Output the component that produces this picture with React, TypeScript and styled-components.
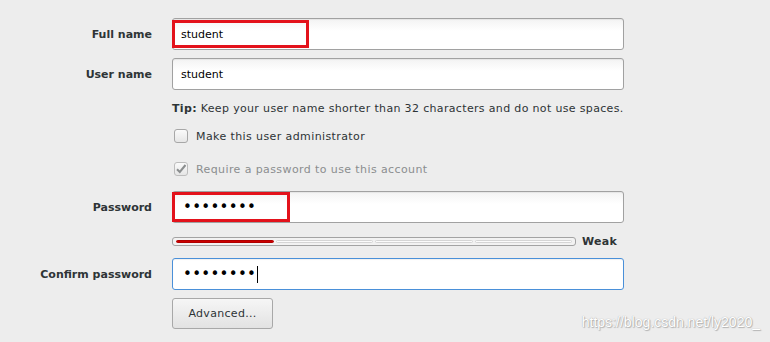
import React from 'react';
import styled, { createGlobalStyle } from 'styled-components';

const GlobalStyle = createGlobalStyle`
  html, body {
    margin: 0;
    padding: 0;
    background: #ededed;
  }
  body {
    font-family: 'DejaVu Sans', 'Liberation Sans', sans-serif;
    font-size: 11px;
    color: #2e3436;
  }
`;

const s = {
  Page: styled.div`
    position: relative;
    width: 770px;
    height: 342px;
    overflow: hidden;
    background: #ededed;
    padding-top: 18px;
    box-sizing: border-box;
  `,
  Row: styled.div<{ $mt?: number; $h?: number }>`
    display: grid;
    grid-template-columns: 152px 452px;
    column-gap: 20px;
    align-items: center;
    margin-top: ${(p) => p.$mt ?? 0}px;
    height: ${(p) => p.$h ?? 32}px;
  `,
  Label: styled.div`
    text-align: right;
    font-weight: bold;
    color: #2e3436;
  `,
  Entry: styled.div<{ $focus?: boolean }>`
    position: relative;
    height: 32px;
    box-sizing: border-box;
    border: 1px solid ${(p) => (p.$focus ? '#4a90d9' : '#a1a1a1')};
    border-radius: 3px;
    background: ${(p) => (p.$focus ? '#ffffff' : 'linear-gradient(#f3f3f3, #ffffff 40%)')};
    box-shadow: inset 0 1px 1px rgba(0, 0, 0, 0.06);
    display: flex;
    align-items: center;
    padding-left: 8px;
    color: #000;
  `,
  Dots: styled.span`
    font-size: 15px;
    letter-spacing: 0.3px;
    line-height: 1;
    padding-left: 2px;
    color: #000;
  `,
  Cursor: styled.span`
    display: inline-block;
    width: 1px;
    height: 17px;
    background: #000;
    margin-left: 1px;
  `,
  Annot: styled.div<{ $w: number; $h: number; $top: number }>`
    position: absolute;
    left: -1px;
    top: ${(p) => p.$top}px;
    width: ${(p) => p.$w}px;
    height: ${(p) => p.$h}px;
    box-sizing: border-box;
    border: 3px solid #e3121b;
  `,
  Tip: styled.div`
    color: #2e3436;
    white-space: nowrap;
    letter-spacing: 0.34px;
  `,
  Check: styled.label<{ $disabled?: boolean }>`
    display: flex;
    align-items: center;
    gap: 8px;
    padding-left: 2px;
    letter-spacing: 0.4px;
    color: ${(p) => (p.$disabled ? '#8b8e8f' : '#2e3436')};
  `,
  Box: styled.span<{ $disabled?: boolean }>`
    width: 14px;
    height: 14px;
    box-sizing: border-box;
    border: 1px solid ${(p) => (p.$disabled ? '#bdbdbd' : '#a7a7a7')};
    border-radius: 3px;
    background: linear-gradient(#fafafa, #e6e6e6);
    display: flex;
    align-items: center;
    justify-content: center;
  `,
  Strength: styled.div`
    display: flex;
    align-items: center;
    gap: 6px;
  `,
  Bar: styled.div`
    width: 404px;
    height: 9px;
    box-sizing: border-box;
    border: 1px solid #a3a3a3;
    border-radius: 3px;
    background: #f2f2f2;
    display: flex;
    gap: 2px;
    padding: 2px 3px;
  `,
  Segment: styled.div<{ $on?: boolean }>`
    flex: 1;
    height: 3px;
    box-sizing: border-box;
    border-radius: 2px;
    background: ${(p) => (p.$on ? '#cc0000' : '#fbfbfb')};
    border: 1px solid ${(p) => (p.$on ? '#b00000' : '#d5d5d5')};
  `,
  Weak: styled.span`
    font-weight: bold;
    letter-spacing: 0.3px;
    color: #2e3436;
  `,
  Button: styled.button`
    width: 101px;
    height: 31px;
    box-sizing: border-box;
    border: 1px solid #a8a8a8;
    border-radius: 3px;
    background: linear-gradient(#f6f6f6, #e2e2e2);
    font-family: 'DejaVu Sans', sans-serif;
    font-size: 11px;
    letter-spacing: 0.3px;
    color: #2e3436;
    padding: 0;
  `,
  Watermark: styled.div`
    position: absolute;
    right: 10px;
    bottom: 12px;
    font-family: 'Liberation Sans', Arial, sans-serif;
    font-size: 14px;
    color: #ffffff;
    text-shadow: 0 0 1px #9a9a9a, 1px 1px 1px #b5b5b5;
  `,
};

const Tick = () => (
  <svg width="12" height="12" viewBox="0 0 12 12">
    <path d="M2 6.2 L4.8 9 L10.5 2" fill="none" stroke="#8b8e8f" strokeWidth="2" />
  </svg>
);

const App = (): JSX.Element => {
  const segments = [true, false, false, false];
  return (
    <s.Page>
      <GlobalStyle />
      <s.Row>
        <s.Label>Full name</s.Label>
        <s.Entry>
          student
          <s.Annot $w={137} $h={28} $top={1} />
        </s.Entry>
      </s.Row>
      <s.Row $mt={8}>
        <s.Label>User name</s.Label>
        <s.Entry>student</s.Entry>
      </s.Row>
      <s.Row $mt={8} $h={20}>
        <span />
        <s.Tip>
          <b>Tip:</b> Keep your user name shorter than 32 characters and do not use spaces.
        </s.Tip>
      </s.Row>
      <s.Row $mt={8} $h={20}>
        <span />
        <s.Check>
          <s.Box />
          Make this user administrator
        </s.Check>
      </s.Row>
      <s.Row $mt={13} $h={20}>
        <span />
        <s.Check $disabled>
          <s.Box $disabled>
            <Tick />
          </s.Box>
          Require a password to use this account
        </s.Check>
      </s.Row>
      <s.Row $mt={12}>
        <s.Label>Password</s.Label>
        <s.Entry>
          <s.Dots>••••••••</s.Dots>
          <s.Annot $w={118} $h={30} $top={0} />
        </s.Entry>
      </s.Row>
      <s.Row $mt={8} $h={20}>
        <span />
        <s.Strength>
          <s.Bar>
            {segments.map((on, i) => (
              <s.Segment key={i} $on={on} />
            ))}
          </s.Bar>
          <s.Weak>Weak</s.Weak>
        </s.Strength>
      </s.Row>
      <s.Row $mt={7}>
        <s.Label>Confirm password</s.Label>
        <s.Entry $focus>
          <s.Dots>••••••••</s.Dots>
          <s.Cursor />
        </s.Entry>
      </s.Row>
      <s.Row $mt={8} $h={31}>
        <span />
        <div>
          <s.Button>Advanced...</s.Button>
        </div>
      </s.Row>
      <s.Watermark>https://blog.csdn.net/ly2020_</s.Watermark>
    </s.Page>
  );
};

export default App;
